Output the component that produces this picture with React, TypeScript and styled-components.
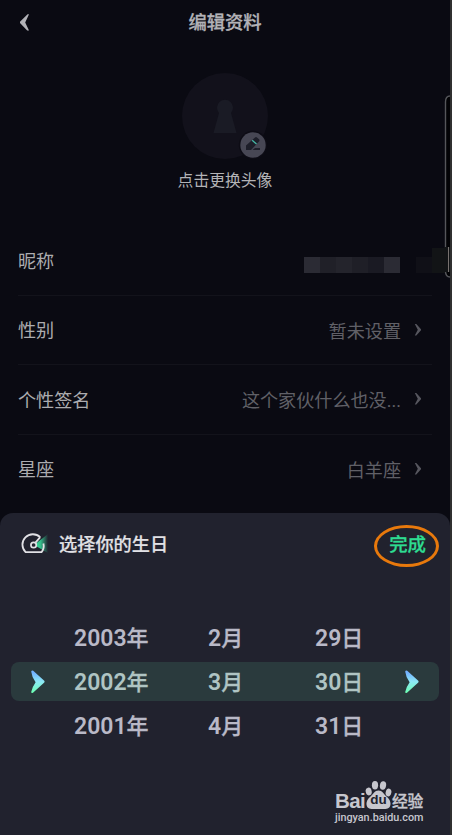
import React from "react";
import styled, { createGlobalStyle } from "styled-components";

const Global = createGlobalStyle`
  *{box-sizing:border-box}
  body{margin:0;background:#0a0a12;font-family:Roboto,"Noto Sans CJK SC",sans-serif;overflow:hidden}
`;
const Screen = styled.div`
  position:relative;width:452px;height:835px;display:flex;flex-direction:column;
  background:#0a0a12;border-right:2px solid #303030;overflow:hidden;
`;
const Header = styled.header`
  height:46px;display:grid;grid-template-columns:48px 1fr 48px;align-items:center;
`;
const BackIcon = styled.svg`width:9px;height:17px;margin:-2px 0 0 20px;display:block;`;
const Title = styled.h1`
  margin:0;text-align:center;font-size:18.3px;line-height:26px;font-weight:500;color:#b2b2b7;
  -webkit-text-stroke:.3px currentColor;
`;
const Profile = styled.section`
  height:180px;display:flex;flex-direction:column;align-items:center;padding-top:27px;
`;
const Avatar = styled.div`position:relative;width:86px;height:86px;`;
const AvatarArt = styled.svg`display:block;width:86px;height:86px;`;
const EditBadge = styled.svg`position:absolute;left:56px;top:57px;width:30px;height:30px;`;
const Hint = styled.div`margin-top:10px;font-size:15.8px;line-height:24px;color:#b3b3b6;`;
const List = styled.div`padding:0 18px;height:287px;`;
const Row = styled.div`
  height:69.5px;display:flex;align-items:center;border-bottom:1px solid #13131b;
  &:last-child{border-color:transparent}
`;
const Label = styled.span`font-size:18.1px;line-height:26px;color:#acacaf;flex:1;padding-top:3px;`;
const Value = styled.span`font-size:18.1px;line-height:26px;color:#606067;margin-right:13px;padding-top:4px;`;
const Chevron = styled.svg`width:8px;height:12px;margin-right:10px;`;
const Mosaic = styled.div`display:flex;align-items:flex-end;height:25px;margin:0 -16px 0 0;`;
const Cell = styled.i<{ $c: string; $tall?: boolean }>`
  width:16px;height:${p => (p.$tall ? 25 : 16)}px;background:${p => p.$c};
`;
const Handle = styled.svg`position:absolute;left:444px;top:94px;width:6px;height:185px;`;
const Sheet = styled.section`
  height:322px;background:#21222e;border-radius:13px 13px 0 0;display:flex;flex-direction:column;position:relative;
`;
const SheetHead = styled.div`height:63px;display:flex;align-items:center;padding:0 24px 0 20px;`;
const Gauge = styled.svg`width:32px;height:26px;margin-top:-2px;`;
const SheetTitle = styled.h2`
  flex:1;margin:0 0 0 7px;font-size:18.2px;line-height:26px;font-weight:500;color:#e1e1e5;
  -webkit-text-stroke:.2px currentColor;
`;
const Done = styled.button`
  border:0;background:none;padding:0;font:500 18.4px/26px Roboto,"Noto Sans CJK SC",sans-serif;color:#2edc91;
  -webkit-text-stroke:.3px currentColor;
`;
const Ring = styled.div`
  position:absolute;left:374px;top:12px;width:65px;height:42px;border:3px solid #e8790c;border-radius:50%;
`;
const Picker = styled.div`margin:42px 11px 0;display:flex;flex-direction:column;gap:5.3px;`;
const PickRow = styled.div<{ $on?: boolean }>`
  height:39px;border-radius:8px;display:grid;grid-template-columns:63px 134px 107px 90px 1fr;align-items:center;
  background:${p => (p.$on ? "#2a3a3d" : "transparent")};
  color:${p => (p.$on ? "#afc4c3" : "#b9b9c7")};
  font-size:23px;line-height:30px;font-weight:600;
`;
const DateText = styled.span`padding-top:2px;`;
const Unit = styled.span`font-size:22px;font-weight:500;-webkit-text-stroke:.3px currentColor;`;
const Marker = styled.svg`width:14px;height:24px;margin-left:20px;display:block;`;
const EndMarker = styled(Marker)`margin-left:0;`;
const Watermark = styled.div`
  position:absolute;left:335px;bottom:11px;width:90px;color:#c7c7ce;display:flex;flex-direction:column;
`;
const Brand = styled.div`display:flex;align-items:flex-end;height:30px;font-weight:700;`;
const Bai = styled.span`font-family:"Liberation Sans",sans-serif;font-size:20.5px;line-height:19px;width:30px;letter-spacing:-.6px;`;
const PawWrap = styled.span`position:relative;width:27px;height:30px;`;
const Paw = styled.svg`display:block;width:27px;height:30px;`;
const Du = styled.span`
  position:absolute;left:4px;top:12px;width:19px;text-align:center;color:#21222e;font:700 13.5px/16px "Liberation Sans",sans-serif;
`;
const Jingyan = styled.span`
  font-size:15.8px;line-height:17px;letter-spacing:-.4px;font-weight:500;-webkit-text-stroke:.3px currentColor;
`;
const Site = styled.div`font:500 10.8px/12px Roboto,sans-serif;margin-top:2px;white-space:nowrap;`;

const Arrow = () => (
  <>
    <defs>
      <linearGradient id="tip" x1="0" y1="0" x2="0" y2="1">
        <stop offset="0.1" stopColor="#73b1ff" />
        <stop offset="0.5" stopColor="#8de9f5" />
        <stop offset="1" stopColor="#6affb0" />
      </linearGradient>
    </defs>
    <path d="M.2 1.4Q.8-.1 2.2.8L13 10.5Q14.2 11.6 13 12.8L2 22.7Q.3 23.6.2 22Q1.2 17 4.6 12.2Q.8 7 .2 1.4Z" fill="url(#tip)" />
  </>
);

const settings = [
  { label: "性别", value: "暂未设置" },
  { label: "个性签名", value: "这个家伙什么也没..." },
  { label: "星座", value: "白羊座" },
];
const dates = [
  ["2003", "2", "29"],
  ["2002", "3", "30"],
  ["2001", "4", "31"],
];
const cells = ["#2b2b34", "#202028", "#24242c", "#1f1f27", "#1a1a23", "#2b2b34", "transparent", "#101017"];

export default function App() {
  return (
    <>
      <Global />
      <Screen>
        <Header>
          <BackIcon viewBox="0 0 9 17"><path d="M9 .3H7.6L0 7.8V9L7.2 16.6H9L5.2 8.5Z" fill="#b2b2b7" /></BackIcon>
          <Title>编辑资料</Title>
        </Header>
        <Profile>
          <Avatar>
            <AvatarArt viewBox="0 0 86 86">
              <circle cx="43" cy="43" r="43" fill="#12111b" />
              <path d="M37 40A8 8 0 1 1 49 40L54.5 60H31.5Z" fill="#1a1b25" />
            </AvatarArt>
            <EditBadge viewBox="0 0 30 30">
              <circle cx="15" cy="15" r="14.2" fill="#0d0c15" />
              <circle cx="15" cy="15" r="12.7" fill="#474754" />
              <path d="M8 20V15.5L17 7.5Q18 6.5 19 7.5L21 9.3Q22 10.5 21 11.5L13 20ZM14.5 20L17 18H22V20Z" fill="#1d1e29" />
              <path d="M14.2 10.2L18.5 14" stroke="#46b8a7" strokeWidth="1.3" />
            </EditBadge>
          </Avatar>
          <Hint>点击更换头像</Hint>
        </Profile>
        <List>
          <Row>
            <Label>昵称</Label>
            <Mosaic>
              {cells.map((c, i) => <Cell key={i} $c={c} />)}
              <Cell $c="#121416" $tall />
            </Mosaic>
          </Row>
          {settings.map(s => (
            <Row key={s.label}>
              <Label>{s.label}</Label>
              <Value>{s.value}</Value>
              <Chevron viewBox="0 0 8 12"><path d="M.8 0H2.3L7 5.2V6.3L2.3 11.5H.8L3.8 5.8Z" fill="#56565e" /></Chevron>
            </Row>
          ))}
        </List>
        <Sheet>
          <SheetHead>
            <Gauge viewBox="0 0 32 26">
              <defs>
                <linearGradient id="beam"><stop offset="0" stopColor="#39d99c" /><stop offset=".45" stopColor="#35c28d" /><stop offset="1" stopColor="#21222e" /></linearGradient>
              </defs>
              <path d="M14 14L28 3V22Z" fill="url(#beam)" />
              <path d="M20.2 6.2A10.4 10.4 0 0 0 5.6 21.2H21.5A10 10 0 0 0 23.4 12.5M15.5 11.7L20.2 6.2" fill="none" stroke="#e1e1e5" strokeWidth="1.8" strokeLinejoin="round" />
              <circle cx="13.6" cy="14" r="2.7" fill="#21222e" stroke="#e1e1e5" strokeWidth="1.7" />
            </Gauge>
            <SheetTitle>选择你的生日</SheetTitle>
            <Done>完成</Done>
          </SheetHead>
          <Ring />
          <Picker>
            {dates.map(([y, m, d], i) => (
              <PickRow key={y} $on={i === 1}>
                <span>{i === 1 && <Marker viewBox="0 0 14 24"><Arrow /></Marker>}</span>
                <DateText>{y}<Unit>年</Unit></DateText>
                <DateText>{m}<Unit>月</Unit></DateText>
                <DateText>{d}<Unit>日</Unit></DateText>
                <span>{i === 1 && <EndMarker viewBox="0 0 14 24"><Arrow /></EndMarker>}</span>
              </PickRow>
            ))}
          </Picker>
          <Watermark>
            <Brand>
              <Bai>Bai</Bai>
              <PawWrap>
                <Paw viewBox="0 0 26 30" fill="#c7c7ce">
                  <ellipse cx="3.2" cy="11.5" rx="3" ry="3.9" transform="rotate(-12 3.2 11.5)" />
                  <ellipse cx="9.5" cy="5.2" rx="3.1" ry="4.2" />
                  <ellipse cx="17.5" cy="5.5" rx="3.1" ry="4.2" transform="rotate(10 17.5 5.5)" />
                  <ellipse cx="23" cy="12.5" rx="2.8" ry="3.9" transform="rotate(15 23 12.5)" />
                  <path d="M13 10.5C17 10.5 18 14 21 16.5C27 21 26 29 20 29H6C0 29-1 21 5 16.5C8 14 9 10.5 13 10.5Z" />
                </Paw>
                <Du>du</Du>
              </PawWrap>
              <Jingyan>经验</Jingyan>
            </Brand>
            <Site>jingyan.baidu.com</Site>
          </Watermark>
        </Sheet>
        <Handle viewBox="0 0 6 185">
          <path d="M6 2Q1.5 2 1.5 8V177Q1.5 183 6 183" fill="#030306" stroke="#55565a" strokeWidth="1.4" />
          <path d="M0 153H6V178H0Z" fill="#121416" />
          <path d="M4.5 153V178" stroke="#77716f" />
        </Handle>
      </Screen>
    </>
  );
}
